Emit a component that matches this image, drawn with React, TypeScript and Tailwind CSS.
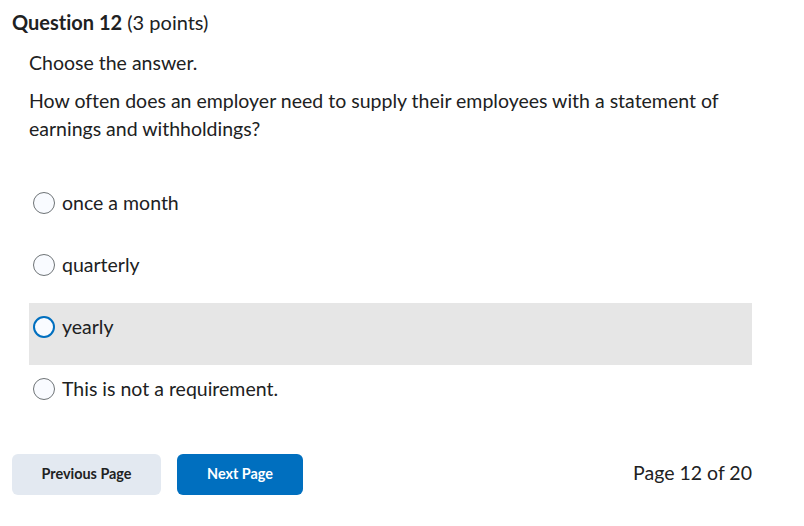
import React, { useState } from 'react';

const options = ['once a month', 'quarterly', 'yearly', 'This is not a requirement.'];

export default function App() {
  const [hovered] = useState(2);

  return (
    <div className="w-[804px] h-[526px] bg-white text-[#202122] font-['Lato','Liberation_Sans',sans-serif] [font-variant-ligatures:none] pl-3 pr-[52px] pt-2">
      <h2 className="text-[20px] leading-[28px]">
        <span className="font-bold">Question 12</span> <span className="font-normal">(3 points)</span>
      </h2>

      <div className="pl-[17px] mt-[13px]">
        <p className="text-[19.5px] leading-[28px]">Choose the answer.</p>
        <p className="text-[19.5px] leading-[28px] mt-[10px] pr-4">
          How often does an employer need to supply their employees with a statement of earnings and withholdings?
        </p>

        <div className="mt-[36px] flex flex-col">
          {options.map((opt, i) => {
            const active = i === hovered;
            return (
              <label
                key={opt}
                className={`h-[62px] flex items-start gap-[7px] pl-1 pt-[10px] ${active ? 'bg-[#e6e6e6]' : ''}`}
              >
                <span
                  className={`mt-[3px] w-[22px] h-[22px] rounded-full shrink-0 bg-[#f9fbff] ${
                    active ? 'border-2 border-[#006fbf]' : 'border border-[#6e7376]'
                  }`}
                />
                <span className="text-[19.5px] leading-[28px]">{opt}</span>
              </label>
            );
          })}
        </div>
      </div>

      <div className="mt-[27px] flex items-center">
        <button className="w-[149px] h-[41px] pb-[2px] rounded-[6px] bg-[#e3e9f1] text-[14.4px] font-bold text-[#202122]">
          Previous Page
        </button>
        <button className="ml-4 w-[126px] h-[41px] pb-[2px] rounded-[6px] bg-[#006fbf] text-[14.4px] font-bold text-white">
          Next Page
        </button>
        <span className="ml-auto -mt-[3px] text-[19.5px] leading-[28px]">Page 12 of 20</span>
      </div>
    </div>
  );
}
